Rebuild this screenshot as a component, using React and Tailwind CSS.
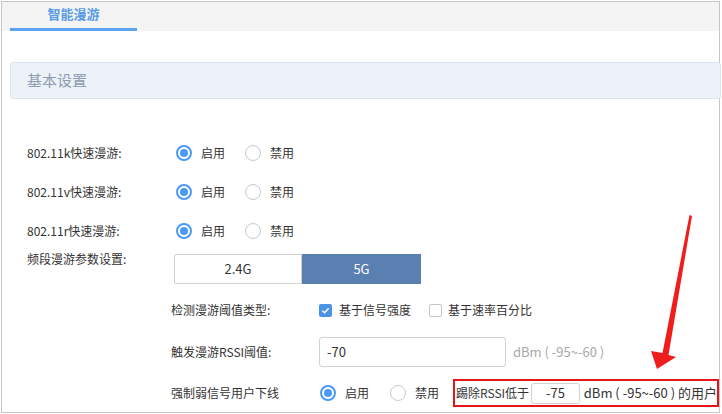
import React from "react";

const font = { fontFamily: '"Noto Sans CJK SC", "Noto Sans", sans-serif' };

function Radio({ checked, className = "" }) {
  return checked ? (
    <span className={"w-4 h-4 rounded-full border-2 border-[#4a9af0] flex items-center justify-center bg-white shrink-0 " + className}>
      <span className="block w-2 h-2 rounded-full bg-[#4a9af0]" />
    </span>
  ) : (
    <span className={"block w-4 h-4 rounded-full border-[1.5px] border-[#c9c9c9] bg-white shrink-0 " + className} />
  );
}

function Check({ checked, className = "" }) {
  return checked ? (
    <span className={"w-[13px] h-[13px] rounded-[2px] bg-[#4b93e6] flex items-center justify-center shrink-0 " + className}>
      <svg width="9" height="9" viewBox="0 0 10 10">
        <path d="M1.5 5.2 L4 7.5 L8.5 2.5" stroke="white" strokeWidth="1.6" fill="none" />
      </svg>
    </span>
  ) : (
    <span className={"block w-[13px] h-[13px] rounded-[2px] border border-[#c6c6c6] bg-white shrink-0 " + className} />
  );
}

function RadioPair() {
  return (
    <div className="flex items-center">
      <Radio checked />
      <span className="ml-[9px]">启用</span>
      <Radio className="ml-[20px]" />
      <span className="ml-[9px]">禁用</span>
    </div>
  );
}

export default function App() {
  return (
    <div className="w-[722px] h-[414px] bg-white relative overflow-hidden text-[12px] text-[#333]" style={font}>
      <div className="ml-[1px] mt-[1px] w-[719px] h-[412px] border border-[#c6c6c6] flex flex-col">
        {/* tab bar */}
        <div className="h-[29px] bg-[#f4f4f4] shrink-0 flex">
          <div className="ml-[8px] w-[127px] h-full flex flex-col">
            <div className="flex-1 flex items-center justify-center text-[13px] font-semibold text-[#5a9de6] pb-[2px]">
              智能漫游
            </div>
            <div className="h-[3px] bg-[#5aa2f2]" />
          </div>
        </div>

        {/* section header */}
        <div className="mt-[31px] h-[37px] ml-[8px] mr-[-2px] bg-[#edf2f9] border border-[#dbe4ef] rounded-[3px] flex items-center pl-[16px] text-[15px] text-[#8c9bb1] shrink-0">
          基本设置
        </div>

        {/* radio rows */}
        <div className="mt-[34px] flex flex-col pl-[25px]">
          {["802.11k快速漫游:", "802.11v快速漫游:", "802.11r快速漫游:"].map((l) => (
            <div key={l} className="h-[39px] flex items-center">
              <span className="w-[149px]">{l}</span>
              <RadioPair />
            </div>
          ))}
          <div className="flex h-[34px]">
            <span className="w-[147px] leading-[16px] mt-[1px]">频段漫游参数设置:</span>
            <div className="mt-[4px] flex h-[30px] text-[13px]">
              <div className="w-[128px] border border-[#d2d2d2] rounded-l-[2px] flex items-center justify-center text-[#333]">
                2.4G
              </div>
              <div className="w-[119px] bg-[#5a80b2] flex items-center justify-center text-white">5G</div>
            </div>
          </div>
        </div>

        {/* sub rows */}
        <div className="pl-[169px] flex flex-col">
          <div className="mt-[8px] h-[36px] flex items-center">
            <span className="w-[148px]">检测漫游阈值类型:</span>
            <Check checked />
            <span className="ml-[7px]">基于信号强度</span>
            <Check className="ml-[18px]" />
            <span className="ml-[6px]">基于速率百分比</span>
          </div>
          <div className="mt-[9px] h-[30px] flex items-center">
            <span className="w-[148px]">触发漫游RSSI阈值:</span>
            <div className="w-[187px] h-[30px] border border-[#d2d2d2] rounded-[3px] flex items-center pl-[7px] text-[13px]">
              -70
            </div>
            <span className="ml-[7px] text-[13px] text-[#a8a8a8]">dBm ( -95~-60 )</span>
          </div>
          <div className="mt-[12px] h-[28px] flex items-center">
            <span className="w-[148px]">强制弱信号用户下线</span>
            <Radio checked className="ml-[1px]" />
            <span className="ml-[9px]">启用</span>
            <Radio className="ml-[21px]" />
            <span className="ml-[9px]">禁用</span>
            <div className="ml-[14px] w-[266px] h-[28px] border-2 border-[#e8151b] flex items-center pl-[1px] whitespace-nowrap">
              <span>踢除RSSI低于</span>
              <div className="ml-[2px] w-[52px] h-[21px] border border-[#d2d2d2] rounded-[3px] flex items-center justify-center text-[13px]">
                -75
              </div>
              <span className="ml-[4px] text-[13px]">dBm ( -95~-60 ) 的用户</span>
            </div>
          </div>
        </div>
      </div>

      {/* red arrow annotation */}
      <svg className="absolute left-0 top-0 pointer-events-none" width="722" height="414">
        <polygon
          points="689.5,215 692,216 668.5,355 676,357 657,369 651,351 662.5,353"
          fill="#f01d1d"
        />
      </svg>
    </div>
  );
}
